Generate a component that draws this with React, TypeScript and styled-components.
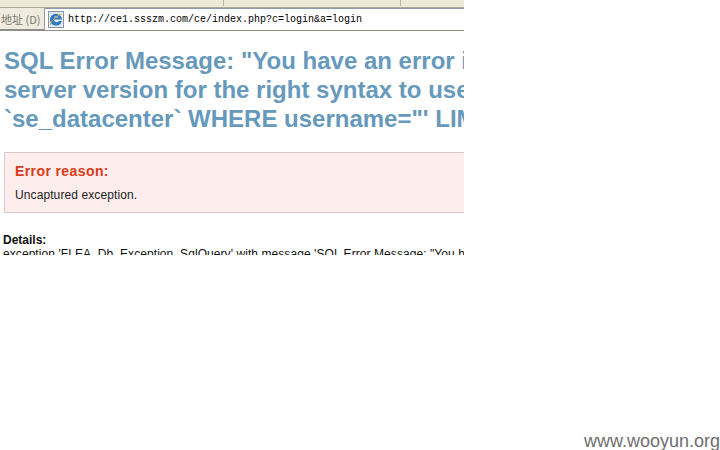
import { createGlobalStyle } from 'styled-components';
import styled from 'styled-components';

const GlobalStyle = createGlobalStyle`
  html, body {
    margin: 0;
    padding: 0;
    background: #ffffff;
  }
`;

const Page = styled.div`
  width: 720px;
  height: 450px;
  display: flex;
  flex-direction: column;
  overflow: hidden;
  font-family: 'Liberation Sans', Arial, sans-serif;
`;

const Shot = styled.div`
  width: 464px;
  height: 255px;
  overflow: hidden;
  flex: none;
`;

const TopStrip = styled.div`
  height: 8px;
  display: flex;
  background: #ece9d8;
  border-bottom: 1px solid #a9a99c;
  box-sizing: border-box;
`;

const StripCell = styled.div<{ $width: number }>`
  width: ${(p) => p.$width}px;
  height: 6px;
  border-right: 1px solid #b5b3a6;
`;

const AddressRow = styled.div`
  height: 21px;
  display: flex;
  align-items: center;
  background: #efecdf;
  border-bottom: 2px solid #8e8e86;
`;

const AddressLabel = styled.span`
  width: 44px;
  padding-left: 1px;
  box-sizing: border-box;
  font-family: 'Noto Sans CJK SC', sans-serif;
  font-size: 11px;
  color: #77776f;
  white-space: nowrap;
  flex: none;
`;

const AddressField = styled.div`
  flex: 1;
  height: 21px;
  display: flex;
  align-items: center;
  gap: 4px;
  padding-left: 3px;
  background: #ffffff;
  border-left: 1px solid #8f9aa8;
  border-top: 1px solid #8f9aa8;
`;

const AddressText = styled.span`
  font-family: 'Liberation Mono', monospace;
  font-size: 10px;
  color: #000000;
  white-space: nowrap;
`;

const Content = styled.div`
  padding: 15px 0 0 4px;
`;

const Heading = styled.h1`
  margin: 0;
  font-size: 24px;
  line-height: 29px;
  font-weight: 700;
  color: #6699bb;
  white-space: nowrap;
`;

const ErrorBox = styled.div`
  margin-top: 19px;
  width: 480px;
  height: 61px;
  box-sizing: border-box;
  padding: 9px 10px;
  background: #fdeded;
  border: 1px solid #d9c9c9;
`;

const ErrorTitle = styled.div`
  font-size: 14px;
  line-height: 18px;
  font-weight: 700;
  letter-spacing: 0.4px;
  color: #d93a1a;
`;

const ErrorText = styled.div`
  margin-top: 8px;
  font-size: 12px;
  line-height: 14px;
  letter-spacing: 0.1px;
  color: #222222;
`;

const DetailsLabel = styled.div`
  margin: 20px 0 0 -1px;
  font-size: 12px;
  line-height: 14px;
  font-weight: 700;
  color: #111111;
`;

const DetailsText = styled.div`
  margin-left: -1px;
  font-size: 12px;
  line-height: 14px;
  letter-spacing: 0.07px;
  color: #111111;
  white-space: nowrap;
`;

const Watermark = styled.div`
  margin-top: auto;
  height: 20px;
  text-align: right;
  font-size: 18px;
  line-height: 22px;
  color: #6e6e6e;
`;

const IeIcon = () => (
  <svg width="16" height="17" viewBox="0 0 16 17">
    <rect x="0.5" y="0.5" width="15" height="16" fill="#dfeaf5" stroke="#8a97a6" />
    <path d="M2 9a6 6 0 0 1 12-.6H6a2.6 2.6 0 0 0 4.8 1.6h3A6 6 0 0 1 2 9z" fill="#2f78c4" />
    <path d="M6 6.6a2.4 2.4 0 0 1 4.4 0z" fill="#dfeaf5" />
    <path d="M2 14C3 10 8 5 13.5 3" fill="none" stroke="#d9a32e" strokeWidth="1" />
  </svg>
);

const App = () => (
  <Page>
    <GlobalStyle />
    <Shot>
      <TopStrip>
        <StripCell $width={223} />
        <StripCell $width={176} />
      </TopStrip>
      <AddressRow>
        <AddressLabel>地址 (D)</AddressLabel>
        <AddressField>
          <IeIcon />
          <AddressText>http://ce1.ssszm.com/ce/index.php?c=login&amp;a=login</AddressText>
        </AddressField>
      </AddressRow>
      <Content>
        <Heading>
          SQL Error Message: "You have an error in your SQL syntax
          <br />
          server version for the right syntax to use near
          <br />
          `se_datacenter` WHERE username="' LIMIT 1
        </Heading>
        <ErrorBox>
          <ErrorTitle>Error reason:</ErrorTitle>
          <ErrorText>Uncaptured exception.</ErrorText>
        </ErrorBox>
        <DetailsLabel>Details:</DetailsLabel>
        <DetailsText>
          exception 'FLEA_Db_Exception_SqlQuery' with message 'SQL Error Message: "You have an error
        </DetailsText>
      </Content>
    </Shot>
    <Watermark>www.wooyun.org</Watermark>
  </Page>
);

export default App;
